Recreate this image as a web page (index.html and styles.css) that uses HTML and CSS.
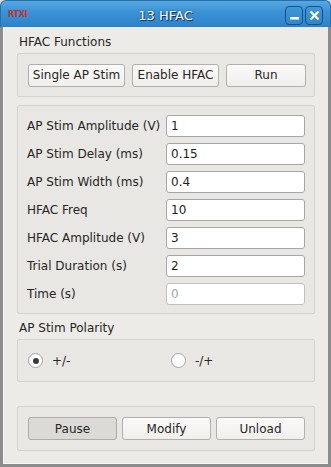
FILE: index.html
```html
<!DOCTYPE html>
<html>
<head>
<meta charset="utf-8">
<link rel="stylesheet" href="styles.css">
</head>
<body>
<div class="window">
  <div class="titlebar">
    <span class="logo">RTXI</span>
    <span class="title">13 HFAC</span>
    <div class="wbtns">
      <div class="wbtn"><svg width="9" height="9" viewBox="0 0 9 9"><rect x="0" y="6" width="9" height="2.5" fill="#fff"/></svg></div>
      <div class="wbtn"><svg width="11" height="11" viewBox="0 0 11 11"><path d="M1.5 1.5 L9.5 9.5 M9.5 1.5 L1.5 9.5" stroke="#fff" stroke-width="2.4"/></svg></div>
    </div>
  </div>
  <div class="frame">
    <div class="section-label">HFAC Functions</div>
    <div class="group g-funcs">
      <button class="btn w96">Single AP Stim</button>
      <button class="btn w86">Enable HFAC</button>
      <button class="btn w79">Run</button>
    </div>
    <div class="group g-params">
      <div class="row"><span class="lbl">AP Stim Amplitude (V)</span><div class="inp">1</div></div>
      <div class="row"><span class="lbl">AP Stim Delay (ms)</span><div class="inp">0.15</div></div>
      <div class="row"><span class="lbl">AP Stim Width (ms)</span><div class="inp">0.4</div></div>
      <div class="row"><span class="lbl">HFAC Freq</span><div class="inp">10</div></div>
      <div class="row"><span class="lbl">HFAC Amplitude (V)</span><div class="inp">3</div></div>
      <div class="row"><span class="lbl">Trial Duration (s)</span><div class="inp">2</div></div>
      <div class="row"><span class="lbl">Time (s)</span><div class="inp disabled">0</div></div>
    </div>
    <div class="section-label second">AP Stim Polarity</div>
    <div class="group g-radio">
      <div class="radio r1"><span class="circle checked"></span><span>+/-</span></div>
      <div class="radio"><span class="circle"></span><span>-/+</span></div>
    </div>
    <div class="group g-bottom">
      <button class="btn w89 pressed">Pause</button>
      <button class="btn w89">Modify</button>
      <button class="btn w89">Unload</button>
    </div>
  </div>
</div>
</body>
</html>
```
FILE: styles.css
```css
html, body {
  margin: 0;
  padding: 0;
  background: #d9d9d9;
}
body {
  font-family: "DejaVu Sans", sans-serif;
  font-size: 12px;
  color: #262626;
}
.window {
  width: 331px;
  height: 467px;
  display: flex;
  flex-direction: column;
}
.titlebar {
  height: 27px;
  box-sizing: border-box;
  border-radius: 6px 6px 0 0;
  background: linear-gradient(#57a8e2 0%, #3b93d6 40%, #2c82c9 100%);
  border: 1px solid #2a6ea8;
  border-bottom: 0;
  position: relative;
  display: flex;
  align-items: center;
}
.logo {
  position: absolute;
  left: 7px;
  top: 9px;
  font-family: "DejaVu Sans", sans-serif;
  font-weight: bold;
  font-size: 8px;
  color: #c8302c;
  letter-spacing: -0.3px;
}
.title {
  flex: 1;
  text-align: center;
  color: #fff;
  font-size: 13px;
  padding-top: 2px;
  text-shadow: 1px 1px 0 #123a5e, 0 0 2px #1b4d7a;
}
.wbtns {
  position: absolute;
  right: 7px;
  top: 5px;
  display: flex;
  gap: 2px;
}
.wbtn {
  width: 18px;
  height: 19px;
  box-sizing: border-box;
  border: 1px solid #1d4f82;
  border-radius: 4px;
  background: linear-gradient(#3f98da, #2f86cc);
  display: flex;
  align-items: center;
  justify-content: center;
}
.frame {
  flex: 1;
  border: 3px solid #8c8c8c;
  border-top: 0;
  background: #edebe7;
  box-shadow: inset 1px 0 0 #f8f7f5, inset 0 -1px 0 #f8f7f5;
  padding: 8px 13px 0 14px;
  display: flex;
  flex-direction: column;
}
.section-label {
  height: 15px;
  line-height: 15px;
  padding-left: 2px;
  margin-bottom: 3px;
}
.section-label.second {
  margin-top: 7px;
  margin-bottom: 3px;
}
.group {
  border: 1px solid #d6d3ce;
  border-radius: 2px;
  background: #e9e7e3;
}
.g-funcs {
  height: 44px;
  box-sizing: border-box;
  display: flex;
  align-items: center;
  padding-left: 10px;
  gap: 7px;
}
.btn {
  height: 23px;
  box-sizing: border-box;
  font-family: "DejaVu Sans", sans-serif;
  font-size: 12px;
  color: #262626;
  border: 1px solid #b3b0ab;
  border-radius: 3px;
  background: linear-gradient(#fbfaf9, #f1efec);
  padding: 0;
  margin: 0;
}
.btn.pressed {
  background: #dcdad6;
  border-color: #aeaba6;
}
.w96 { width: 97px; }
.w86 { width: 87px; }
.w79 { width: 80px; }
.w89 { width: 89px; }
.g-params {
  margin-top: 8px;
  height: 209px;
  box-sizing: border-box;
  padding: 9px 9px 0 8px;
  display: flex;
  flex-direction: column;
  gap: 6px;
}
.row {
  display: flex;
  align-items: center;
  height: 22px;
  justify-content: space-between;
}
.lbl {
  padding-left: 1px;
}
.inp {
  width: 139px;
  height: 22px;
  box-sizing: border-box;
  background: #fff;
  border: 1px solid #a9a6a1;
  border-radius: 3px;
  padding-left: 4px;
  line-height: 20px;
  color: #1e1e1e;
}
.inp.disabled {
  color: #a4a4a4;
  border-color: #c3c0bb;
}
.g-radio {
  height: 43px;
  box-sizing: border-box;
  display: flex;
  align-items: center;
  padding-left: 10px;
}
.radio {
  display: flex;
  align-items: center;
  gap: 9px;
}
.radio.r1 {
  width: 143px;
}
.circle {
  width: 15px;
  height: 15px;
  box-sizing: border-box;
  border-radius: 50%;
  border: 1px solid #a5a29d;
  background: #fff;
  position: relative;
}
.circle.checked::after {
  content: "";
  position: absolute;
  left: 3.5px;
  top: 3.5px;
  width: 6px;
  height: 6px;
  border-radius: 50%;
  background: #3a3a3a;
}
.g-bottom {
  margin-top: 24px;
  height: 45px;
  box-sizing: border-box;
  display: flex;
  align-items: center;
  padding-left: 10px;
  gap: 5px;
}
```
